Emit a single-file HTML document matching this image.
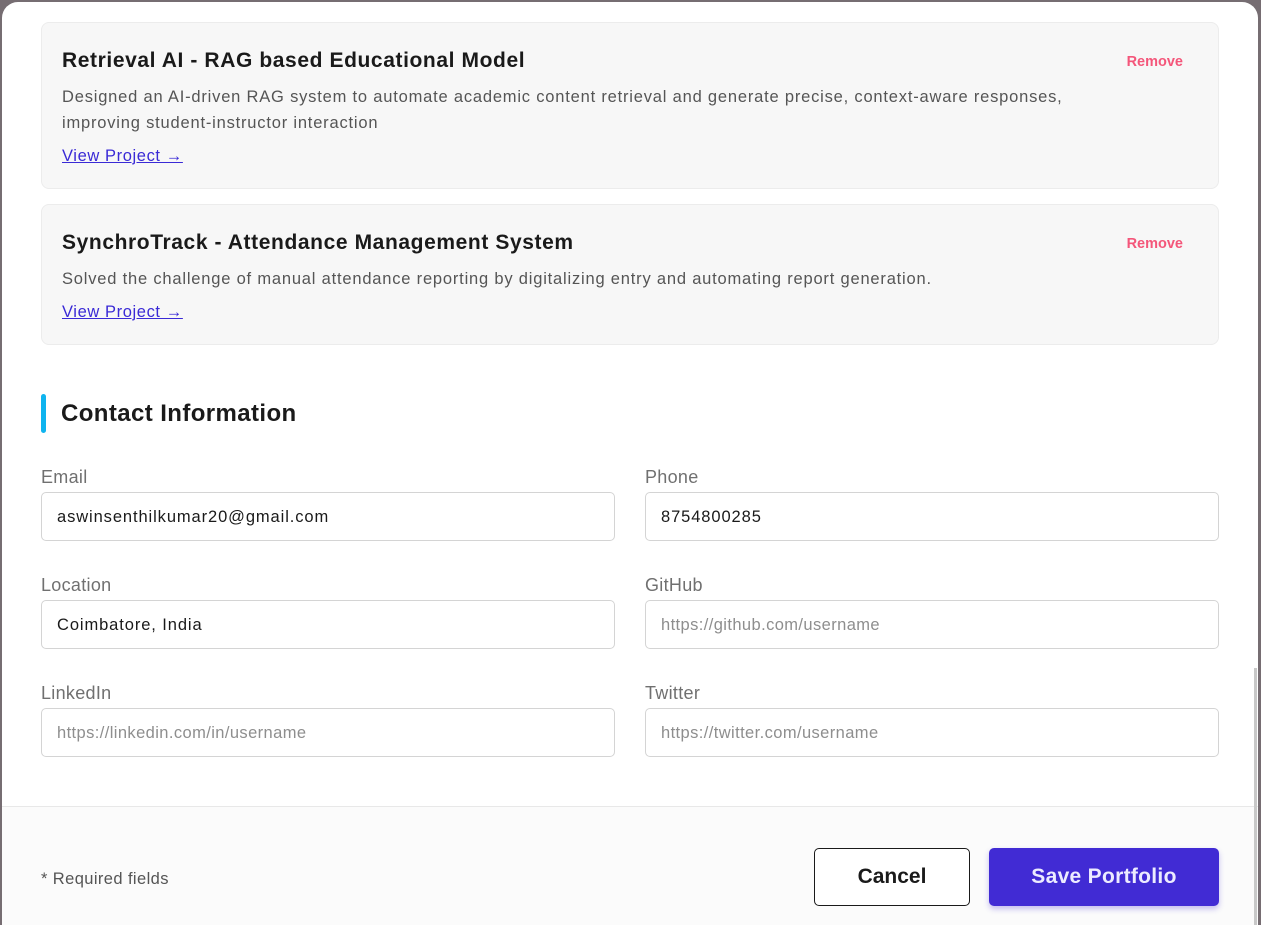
<!DOCTYPE html>
<html style="width:1261px;height:925px;overflow:hidden"><head><style>
*{box-sizing:border-box;margin:0;padding:0}
body{width:1261px;height:925px;background:#766d72;font-family:"Liberation Sans",sans-serif;position:relative;overflow:hidden}
.modal{position:absolute;left:2px;top:2px;width:1256px;height:923px;background:#fff;border-radius:16px 16px 0 0;overflow:hidden}
.card{position:absolute;left:39px;width:1178px;background:#f7f7f7;border:1px solid #ececec;border-radius:8px}
.ct{position:absolute;left:20px;font-size:21px;font-weight:bold;color:#1a1a1a;letter-spacing:0.6px}
.cd{position:absolute;left:20px;font-size:16.5px;color:#555;line-height:26px;letter-spacing:0.8px}
.vp{position:absolute;left:20px;font-size:16.5px;color:#3a2ad6;text-decoration:underline;letter-spacing:0.6px}
.rm{position:absolute;right:35px;font-size:14.5px;font-weight:bold;color:#f4567a}
.lbl{position:absolute;font-size:18px;color:#707070;letter-spacing:0.3px}
.inp{position:absolute;width:574px;height:49px;border:1px solid #d4d4d4;border-radius:5px;background:#fff;font-size:16.5px;padding:0 15px;line-height:49px;color:#1a1a1a;letter-spacing:0.9px}
.ph{color:#8e8e8e;letter-spacing:0.4px}
</style></head><body>
<div class="modal">
<div class="card" style="top:20px;height:167px">
<div class="ct" style="top:26px">Retrieval AI - RAG based Educational Model</div>
<div class="rm" style="top:31px">Remove</div>
<div class="cd" style="top:61px">Designed an AI-driven RAG system to automate academic content retrieval and generate precise, context-aware responses,<br>improving student-instructor interaction</div>
<div class="vp" style="top:124px">View Project →</div>
</div>
<div class="card" style="top:202px;height:141px">
<div class="ct" style="top:26px">SynchroTrack - Attendance Management System</div>
<div class="rm" style="top:31px">Remove</div>
<div class="cd" style="top:61px">Solved the challenge of manual attendance reporting by digitalizing entry and automating report generation.</div>
<div class="vp" style="top:98px">View Project →</div>
</div>
<div style="position:absolute;left:39px;top:392px;width:5px;height:39px;background:#0fb4ef;border-radius:3px"></div>
<div style="position:absolute;left:59px;top:398px;font-size:24px;font-weight:bold;color:#1a1a1a;letter-spacing:0.4px">Contact Information</div>
<div class="lbl" style="left:39px;top:465px">Email</div>
<div class="lbl" style="left:643px;top:465px">Phone</div>
<div class="inp" style="left:39px;top:490px">aswinsenthilkumar20@gmail.com</div>
<div class="inp" style="left:643px;top:490px">8754800285</div>
<div class="lbl" style="left:39px;top:573px">Location</div>
<div class="lbl" style="left:643px;top:573px">GitHub</div>
<div class="inp" style="left:39px;top:598px">Coimbatore, India</div>
<div class="inp ph" style="left:643px;top:598px">https://github.com/username</div>
<div class="lbl" style="left:39px;top:681px">LinkedIn</div>
<div class="lbl" style="left:643px;top:681px">Twitter</div>
<div class="inp ph" style="left:39px;top:706px">https://linkedin.com/in/username</div>
<div class="inp ph" style="left:643px;top:706px">https://twitter.com/username</div>
<div style="position:absolute;left:0;top:804px;width:1256px;height:140px;background:#fbfbfb;border-top:1px solid #e8e8e8">
<div style="position:absolute;left:39px;top:63px;font-size:16.5px;color:#555;letter-spacing:0.4px">* Required fields</div>
<div style="position:absolute;left:812px;top:41px;width:156px;height:58px;border:1.5px solid #1a1a1a;border-radius:5px;background:#fff;text-align:center;line-height:55px;font-size:21px;font-weight:bold;color:#1a1a1a">Cancel</div>
<div style="position:absolute;left:987px;top:41px;width:230px;height:58px;border-radius:5px;background:#412bd4;text-align:center;line-height:58px;font-size:21px;font-weight:bold;color:#ecebff;letter-spacing:0.3px;box-shadow:0 3px 6px rgba(65,43,212,.3)">Save Portfolio</div>
</div>
<div style="position:absolute;left:1252px;top:666px;width:3px;height:280px;background:#c8c8c8"></div>
</div>
</body></html>
